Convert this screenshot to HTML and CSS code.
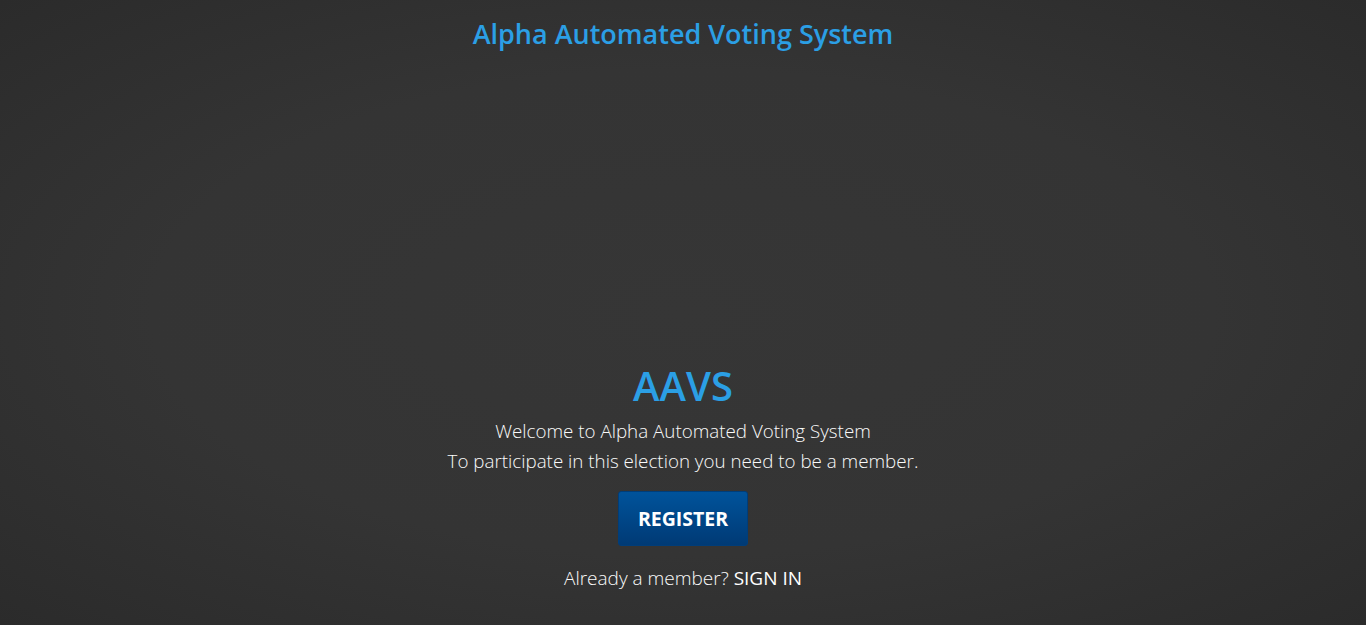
FILE: index.html
```html
<!DOCTYPE html>
<html lang="en">
<head>
<meta charset="utf-8">
<title>AAVS</title>
<link rel="stylesheet" href="styles.css">
</head>
<body>
<div class="page">
  <header class="top">
    <h1 class="brand">Alpha Automated Voting System</h1>
  </header>
  <main class="intro">
    <h2 class="abbr">AAVS</h2>
    <p class="line">Welcome to Alpha Automated Voting System</p>
    <p class="line">To participate in this election you need to be a member.</p>
    <a class="register" href="#">REGISTER</a>
    <p class="signin">Already a member? <a class="signin-link" href="#">SIGN IN</a></p>
  </main>
</div>
</body>
</html>
```

FILE: styles.css
```css
html, body {
  margin: 0;
  padding: 0;
  height: 100%;
}
body {
  background: radial-gradient(ellipse at center, #363636 0%, #343434 55%, #2b2b2b 100%);
  color: #fafafa;
  font-family: "Open Sans", "Noto Sans", sans-serif;
}
.page {
  min-height: 100vh;
  display: flex;
  flex-direction: column;
  align-items: center;
}
.top {
  padding-top: 16px;
}
.brand {
  margin: 0;
  font-size: 27px;
  font-weight: 600;
  color: #2b9fe5;
  line-height: 36px;
}
.intro {
  margin-top: auto;
  padding-bottom: 32px;
  display: flex;
  flex-direction: column;
  align-items: center;
}
.abbr {
  margin: 0 0 10px;
  font-size: 40px;
  font-weight: 600;
  color: #2b9fe5;
  line-height: 40px;
}
.line {
  margin: 0;
  font-size: 18.8px;
  font-weight: 300;
  line-height: 30px;
}
.register {
  margin-top: 15px;
  width: 130px;
  height: 55px;
  box-sizing: border-box;
  display: flex;
  align-items: center;
  justify-content: center;
  background: linear-gradient(#00539b, #003a75);
  border: 1px solid #003d79;
  border-radius: 3px;
  color: #fff;
  font-weight: 700;
  font-size: 19.5px;
  text-decoration: none;
}
.signin {
  margin: 17px 0 0;
  font-size: 19px;
  font-weight: 300;
  line-height: 30px;
}
.signin-link {
  color: #fff;
  font-weight: 400;
  text-decoration: none;
}
```
